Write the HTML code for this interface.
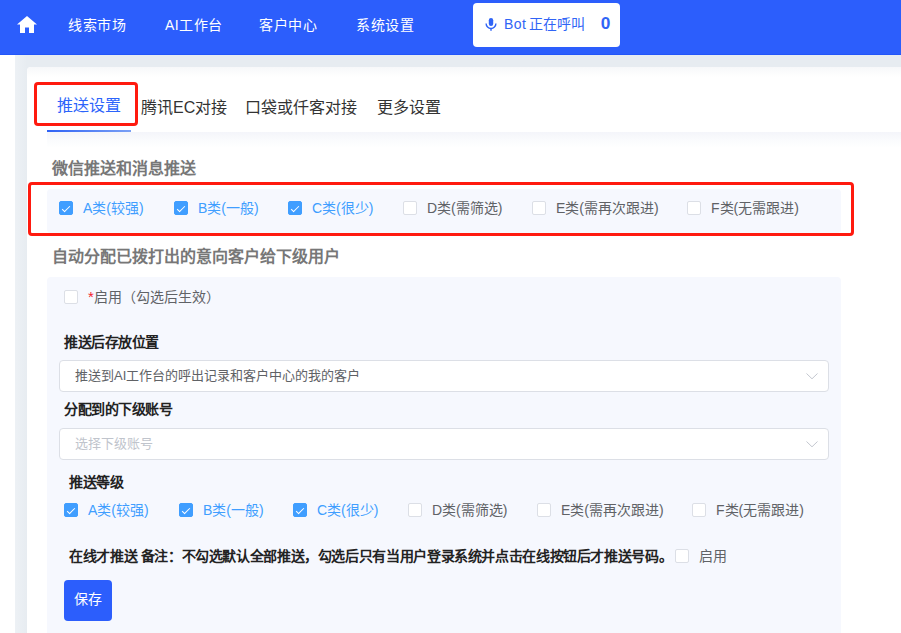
<!DOCTYPE html>
<html lang="zh-CN"><head><meta charset="utf-8">
<style>
*{margin:0;padding:0;box-sizing:border-box}
html,body{width:901px;height:633px;overflow:hidden;background:#fff;font-family:"Liberation Sans",sans-serif;}
.abs{position:absolute}
#hdr{position:absolute;left:0;top:0;width:901px;height:55px;background:#2c5efc;border-bottom:1px solid #2356f8}
.nav{position:absolute;top:16px;color:#fff;font-size:14px;line-height:18px;font-weight:500;letter-spacing:.5px;white-space:nowrap}
#bot{position:absolute;left:473px;top:3px;width:147px;height:44px;background:#fff;border-radius:4px}
#gray{position:absolute;left:15px;top:55px;width:886px;height:578px;background:linear-gradient(90deg,#edf1f5,#e7ecf1 12px)}
#card{position:absolute;left:27px;top:67px;width:900px;height:600px;background:#fff;border-radius:4px}
#tabbar{position:absolute;left:27px;top:67px;width:874px;height:63px;border-radius:4px 0 0 0;background:linear-gradient(#f7f8fa,#fff 10px,#fff)}
#tabshadow{position:absolute;left:47px;top:132px;width:854px;height:16px;background:linear-gradient(#f4f5fa,#fafbfd 50%,#fff)}
.tab{position:absolute;font-size:16px;line-height:20px;color:#333;white-space:nowrap}
.sec{position:absolute;font-size:16px;line-height:20px;color:#777;font-weight:bold;white-space:nowrap}
.panel{position:absolute;left:47px;width:794px;background:#f6f8fe;border-radius:4px}
.cb{position:absolute;width:14px;height:14px;border-radius:2px;border:1px solid #dcdfe6;background:#fff}
.cb.on{background:#409eff;border-color:#409eff}
.cb.on::after{content:"";position:absolute;left:4px;top:1.5px;width:3px;height:7px;border:1px solid #fff;border-left:0;border-top:0;transform:rotate(45deg)}
.lb{position:absolute;font-size:14px;line-height:16px;color:#606266;white-space:nowrap}
.lb.on{color:#409eff}
.red{position:absolute;border:3px solid #ff1a0f;border-radius:4px}
.lbl{position:absolute;font-size:14px;letter-spacing:-0.45px;line-height:16px;color:#222;font-weight:bold;white-space:nowrap}
.sel{position:absolute;left:59px;width:770px;height:32px;background:#fff;border:1px solid #dcdfe6;border-radius:4px}
.sel span{position:absolute;left:15px;top:7px;font-size:13px;line-height:16px;color:#606266;white-space:nowrap}
.sel svg{position:absolute;left:745px;top:11px}
</style></head><body>
<div id="hdr"></div>
<svg class="abs" style="left:17px;top:16px" width="20" height="17" viewBox="0 0 20 17"><path d="M10 0 L20 8.5 L17 8.5 L17 17 L12 17 L12 11.5 L8 11.5 L8 17 L3 17 L3 8.5 L0 8.5 Z" fill="#fff"/></svg>
<div class="nav" style="left:68px">线索市场</div>
<div class="nav" style="left:165px">AI工作台</div>
<div class="nav" style="left:259px">客户中心</div>
<div class="nav" style="left:356px">系统设置</div>
<div id="bot">
  <svg class="abs" style="left:12px;top:15px" width="12" height="14" viewBox="0 0 12 14"><rect x="3.8" y="0" width="4.4" height="8" rx="2.2" fill="#3064f6"/><path d="M1.1 5.6 a4.9 4.9 0 0 0 9.8 0" stroke="#3064f6" stroke-width="1.4" fill="none"/><rect x="5.3" y="10" width="1.4" height="2.8" fill="#3064f6"/></svg>
  <div class="abs" style="left:31px;top:12px;font-size:14px;line-height:18px;color:#3064f6;white-space:nowrap"><span style="letter-spacing:.4px">Bot</span><span style="margin-left:3px">正在呼叫</span></div>
  <div class="abs" style="left:128px;top:11px;font-size:16px;line-height:20px;color:#3064f6;font-weight:bold;transform:scaleX(1.08)">0</div>
</div>
<div id="gray"></div>
<div id="card"></div>
<div id="tabbar"></div>
<div id="tabshadow"></div>
<div class="abs" style="left:47px;top:130px;width:84px;height:2px;background:linear-gradient(90deg,#2f62f5,#7aa0f5)"></div>
<div class="tab" style="left:57px;top:96px;color:#2c64fb">推送设置</div>
<div class="tab" style="left:141px;top:98px">腾讯EC对接</div>
<div class="tab" style="left:245px;top:98px">口袋或仟客对接</div>
<div class="tab" style="left:377px;top:98px">更多设置</div>
<div class="red" style="left:34px;top:82px;width:104px;height:44px"></div>

<div class="sec" style="left:52px;top:159px">微信推送和消息推送</div>
<div class="panel" style="top:189px;height:44px"></div>
<div class="cb on" style="left:59px;top:201px"></div><div class="lb on" style="left:83px;top:200px">A类(较强)</div>
<div class="cb on" style="left:174px;top:201px"></div><div class="lb on" style="left:198px;top:200px">B类(一般)</div>
<div class="cb on" style="left:288px;top:201px"></div><div class="lb on" style="left:312px;top:200px">C类(很少)</div>
<div class="cb" style="left:403px;top:201px"></div><div class="lb" style="left:427px;top:200px">D类(需筛选)</div>
<div class="cb" style="left:532px;top:201px"></div><div class="lb" style="left:556px;top:200px">E类(需再次跟进)</div>
<div class="cb" style="left:687px;top:201px"></div><div class="lb" style="left:711px;top:200px">F类(无需跟进)</div>
<div class="red" style="left:28px;top:182px;width:826px;height:54px"></div>

<div class="sec" style="left:52px;top:247px">自动分配已拨打出的意向客户给下级用户</div>
<div class="panel" style="top:277px;height:400px"></div>
<div class="cb" style="left:64px;top:290px"></div>
<div class="abs" style="left:88px;top:289px;font-size:14px;line-height:16px;color:#606266;white-space:nowrap"><span style="color:#f5222d;font-size:15px">*</span>启用（勾选后生效）</div>

<div class="lbl" style="left:64px;top:334px">推送后存放位置</div>
<div class="sel" style="top:360px"><span>推送到AI工作台的呼出记录和客户中心的我的客户</span><svg width="13" height="9" viewBox="0 0 13 9"><polyline points="1.5,1.5 7,6.8 12.5,1.5" fill="none" stroke="#c4c8d0" stroke-width="1"/></svg></div>
<div class="lbl" style="left:64px;top:401px">分配到的下级账号</div>
<div class="sel" style="top:428px"><span style="color:#c0c4cc">选择下级账号</span><svg width="13" height="9" viewBox="0 0 13 9"><polyline points="1.5,1.5 7,6.8 12.5,1.5" fill="none" stroke="#c4c8d0" stroke-width="1"/></svg></div>

<div class="lbl" style="left:69px;top:474px">推送等级</div>
<div class="cb on" style="left:64px;top:503px"></div><div class="lb on" style="left:88px;top:502px">A类(较强)</div>
<div class="cb on" style="left:179px;top:503px"></div><div class="lb on" style="left:203px;top:502px">B类(一般)</div>
<div class="cb on" style="left:293px;top:503px"></div><div class="lb on" style="left:317px;top:502px">C类(很少)</div>
<div class="cb" style="left:408px;top:503px"></div><div class="lb" style="left:432px;top:502px">D类(需筛选)</div>
<div class="cb" style="left:537px;top:503px"></div><div class="lb" style="left:561px;top:502px">E类(需再次跟进)</div>
<div class="cb" style="left:692px;top:503px"></div><div class="lb" style="left:716px;top:502px">F类(无需跟进)</div>

<div class="lbl" style="left:69px;top:548px;letter-spacing:-0.37px">在线才推送 备注：不勾选默认全部推送，勾选后只有当用户登录系统并点击在线按钮后才推送号码。</div>
<div class="cb" style="left:675px;top:549px"></div><div class="lb" style="left:699px;top:548px">启用</div>
<div class="abs" style="left:64px;top:580px;width:48px;height:41px;background:#2c5efc;border-radius:4px;color:#fff;font-size:14px;line-height:39px;font-weight:500;text-align:center">保存</div>
</body></html>
